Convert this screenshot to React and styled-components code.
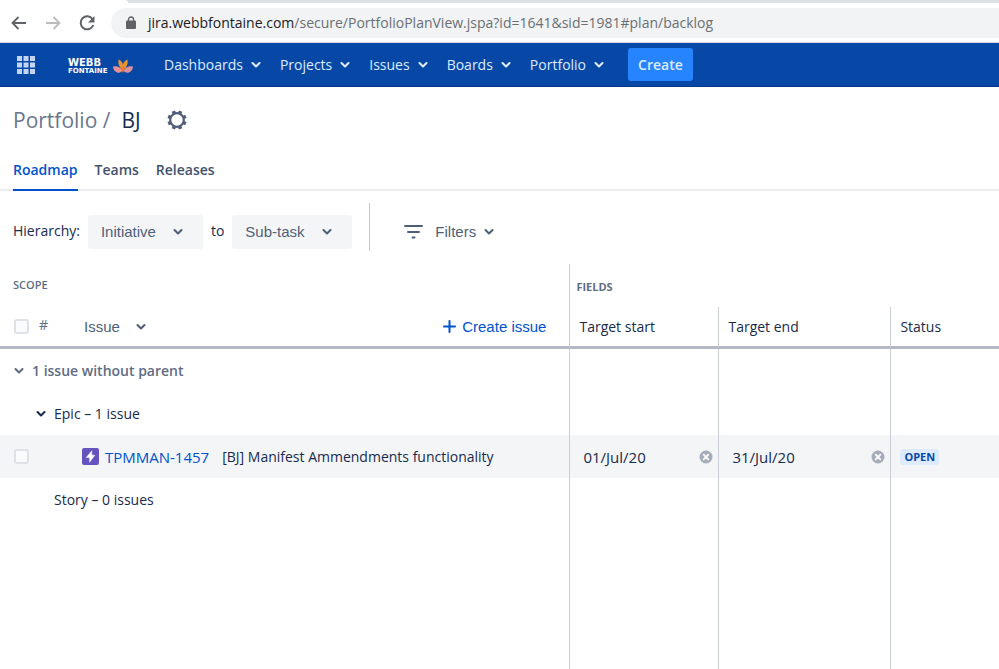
import React from "react";
import styled, { createGlobalStyle } from "styled-components";

const ui = `"Segoe UI", "Open Sans", "Noto Sans", sans-serif`;
const arial = `Arial, "Liberation Sans", sans-serif`;

const GlobalStyle = createGlobalStyle`
  * {
    box-sizing: border-box;
  }
  body {
    margin: 0;
    background: #fff;
    color: #172b4d;
    font: 14px/20px ${ui};
  }
  button, select, input {
    font: inherit;
    color: inherit;
  }
`;

const Page = styled.div`
  display: flex;
  flex-direction: column;
  min-height: 100vh;
  overflow-x: hidden;
`;

// Browser
const TabStrip = styled.div`
  display: flex;
  height: 3px;
  background: #dee1e6;
`;
const ActiveTab = styled.div`
  width: 128px;
  background: #fff;
  border-top-right-radius: 3px;
`;
const BrowserBar = styled.div`
  display: flex;
  align-items: center;
  height: 40px;
  padding-left: 9px;
  border-bottom: 1px solid #dadce0;
`;
const BrowserButton = styled.button`
  display: flex;
  padding: 0;
  margin-right: 14px;
  border: 0;
  background: none;
  color: ${(props) => (props.$dim ? "#babcbe" : "#5f6368")};
`;
const AddressBox = styled.div`
  display: flex;
  flex: 1;
  align-items: center;
  gap: 12px;
  height: 30px;
  padding-left: 15px;
  border-radius: 15px 0 0 15px;
  background: #f1f3f4;
  color: #5f6368;
`;
const Address = styled.div`
  color: #6b6f73;
  white-space: nowrap;
  b {
    color: #202124;
    font-weight: 400;
  }
`;

// Top navigation
const NavBar = styled.nav`
  display: flex;
  align-items: center;
  height: 44px;
  padding-left: 17px;
  background: #0747a6;
  border-bottom: 1px solid #09388a;
  color: #deebff;
`;
const SwitcherButton = styled.button`
  display: flex;
  padding: 0;
  border: 0;
  background: none;
`;
const LogoLink = styled.a`
  display: flex;
  margin: 0 31px 0 32px;
`;
const NavItems = styled.div`
  display: flex;
  gap: 19px;
`;
const MenuButton = styled.button`
  display: flex;
  align-items: center;
  gap: 8px;
  padding: 0;
  border: 0;
  background: none;
  white-space: nowrap;
`;
const CreateButton = styled.button`
  height: 33px;
  margin-left: 24px;
  padding: 0 10px;
  border: 0;
  border-radius: 3px;
  background: #2684ff;
  font-weight: 600;
`;

// Plan header
const PlanHeader = styled.header`
  display: flex;
  align-items: center;
  height: 66px;
  padding-left: 13px;
  font-size: 21px;
  line-height: 28px;
`;
const Crumb = styled.a`
  color: #6b778c;
  text-decoration: none;
`;
const PlanName = styled.h1`
  margin: 0 26px 0 11px;
  font: inherit;
`;
const IconButton = styled.button`
  display: flex;
  padding: 0;
  border: 0;
  background: none;
  color: #505f79;
`;
const Tabs = styled.div`
  display: flex;
  gap: 17px;
  height: 38px;
  padding-left: 13px;
  box-shadow: inset 0 -2px #ebecf0;
`;
const Tab = styled.a`
  padding-top: 7px;
  color: ${(props) => (props.$active ? "#0052cc" : "#42526e")};
  border-bottom: 2px solid ${(props) => (props.$active ? "#0052cc" : "transparent")};
  font-weight: 600;
  text-decoration: none;
`;

// Filters
const Toolbar = styled.div`
  display: flex;
  height: 73px;
  padding: 12px 0 0 13px;
`;
const ToolGroup = styled.div`
  display: flex;
  align-items: center;
  gap: 8px;
  height: 34px;
  margin-top: 12px;
  label {
    padding-bottom: 2px;
  }
`;
const SelectBox = styled.span`
  display: grid;
  align-items: center;
  width: ${(props) => props.$width}px;
  color: #505f79;
  font: 15px/20px ${arial};
  > * {
    grid-area: 1 / 1;
  }
  svg {
    justify-self: end;
    margin-right: 20px;
    pointer-events: none;
  }
`;
const Select = styled.select`
  appearance: none;
  width: 100%;
  height: 34px;
  padding: 0 13px;
  border: 0;
  border-radius: 3px;
  background: #f4f5f7;
`;
const Separator = styled.div`
  width: 1px;
  height: 48px;
  margin: 0 34px 0 17px;
  background: #c1c7d0;
`;
const GreyButton = styled(MenuButton)`
  gap: ${(props) => props.$gap || 8}px;
  color: #505f79;
  font: 15px/20px ${arial};
`;
const FilterLabel = styled.span`
  padding-left: 4px;
`;

// Plan table
const TableArea = styled.main`
  display: grid;
  flex: 1;
`;
const Table = styled.table`
  width: 100%;
  height: 100%;
  border-collapse: separate;
  border-spacing: 0;
  table-layout: fixed;
`;
const Col = styled.col`
  width: ${(props) => props.$width};
`;
const GroupHead = styled.th`
  height: 43px;
  padding: ${(props) => (props.$divided ? "2px 0 0 6px" : "0 0 2px 13px")};
  border-left: ${(props) => (props.$divided ? "1px solid #c9ced6" : "0")};
  color: #5e6c84;
  font-size: 11px;
  font-weight: ${(props) => (props.$divided ? 700 : 600)};
  text-align: left;
`;
const HeadCell = styled.th`
  height: 42px;
  padding: 0 0 0 ${(props) => (props.$scope ? 14 : 9)}px;
  border-left: ${(props) => (props.$scope ? "0" : "1px solid #c9ced6")};
  border-bottom: 3px solid #b3bac5;
  font-weight: 400;
  text-align: left;
`;
const HeadLine = styled.div`
  display: flex;
  align-items: center;
`;
const Hash = styled.span`
  width: 55px;
  padding: 0 0 4px 10px;
  color: #5e6c84;
`;
const CreateIssue = styled(GreyButton)`
  margin: 0 23px 0 auto;
  color: #0052cc;
`;
const CheckBox = styled.input.attrs({ type: "checkbox" })`
  appearance: none;
  width: 15px;
  height: 15px;
  margin: 0;
  border: 2px solid #dfe1e6;
  border-radius: 3px;
  background: #fafbfc;
`;
const Row = styled.tr`
  height: 43px;
  background: ${(props) => (props.$selected ? "#f4f5f7" : "transparent")};
`;
const FillerRow = styled.tr``;
const Cell = styled.td`
  padding: 0 5px 0 13px;
  border-left: 1px solid #c9ced6;
`;
const ScopeCell = styled.td`
  padding: 0 0 0 ${(props) => props.$indent}px;
`;
const GroupToggle = styled(MenuButton)`
  color: ${(props) => (props.$strong ? "#172b4d" : "#5e6c84")};
  font-weight: ${(props) => (props.$bold ? 600 : 400)};
`;
const IssueLine = styled.div`
  display: flex;
  align-items: center;
`;
const EpicBadge = styled.span`
  display: flex;
  margin: 0 6px 0 53px;
`;
const IssueKey = styled.a`
  margin-right: 13px;
  color: #0052cc;
  font-size: 15px;
  text-decoration: none;
`;
const DateLine = styled.div`
  display: flex;
  align-items: center;
  justify-content: space-between;
  font-size: 15px;
`;
const ClearButton = styled(IconButton)`
  color: #a5adba;
`;
const StatusCell = styled(Cell)`
  padding-left: 9px;
`;
const Status = styled.div`
  width: fit-content;
  padding: 0 4px;
  border-radius: 3px;
  background: #deebff;
  color: #0747a6;
  font-size: 11px;
  line-height: 16px;
  font-weight: 700;
`;

const Chevron = () => (
  <svg width="10" height="8" viewBox="0 0 10 8" fill="none">
    <path d="M1.5 2 5 5.5 8.5 2" stroke="currentColor" strokeWidth="2.1" strokeLinecap="round" strokeLinejoin="round" />
  </svg>
);

const Arrow = ({ flip }) => (
  <svg width="20" height="20" viewBox="0 0 20 20" fill="none">
    <path
      d={flip ? "M3 10H16M10.5 4 16.5 10 10.5 16" : "M17 10H4M9.5 4 3.5 10 9.5 16"}
      stroke="currentColor"
      strokeWidth="1.8"
    />
  </svg>
);

const Reload = () => (
  <svg width="20" height="20" viewBox="0 0 20 20" fill="none">
    <path d="M15.6 6.2A6.5 6.5 0 1 0 16.3 12" stroke="currentColor" strokeWidth="2" />
    <path d="M17.5 3V9.5H11Z" fill="currentColor" />
  </svg>
);

const Lock = () => (
  <svg width="10" height="14" viewBox="0 0 10 14" fill="none">
    <rect y="4.5" width="10" height="8.5" rx="1" fill="currentColor" />
    <path d="M2.5 5V3.5a2.5 2.5 0 0 1 5 0V5" stroke="currentColor" strokeWidth="1.4" />
  </svg>
);

const Switcher = () => (
  <svg width="18" height="18" viewBox="0 0 18 18" fill="#c3d5f3">
    {[0, 6.5, 13].map((y) => [0, 6.5, 13].map((x) => <rect key={x + "-" + y} x={x} y={y} width="5" height="5" />))}
  </svg>
);

const Logo = () => (
  <svg width="66" height="20" viewBox="0 0 66 20">
    <g fill="#fff" fontFamily="DejaVu Sans, sans-serif" fontWeight="700">
      <text x="1" y="11" fontSize="10">
        WEBB
      </text>
      <text x="1" y="18" fontSize="7">
        FONTAINE
      </text>
    </g>
    <path d="M55.5 15Q50.500 11 51.500 4.500Q55.500 6 56 10Q56.500 6 60.500 4.500Q61.500 11 56.500 15Z" fill="#e9952f" />
    <path d="M46 11.500Q53 10.500 55.500 16Q53 18.500 50 17.500Q46.500 16 46 11.500Z" fill="#e8918c" />
    <path d="M66 11.500Q59 10.500 56.500 16Q59 18.500 62 17.500Q65.500 16 66 11.500Z" fill="#dd8f9c" />
    <path d="M53.500 12 56 18 58.500 12Z" fill="#e97c36" />
  </svg>
);

const Gear = () => (
  <svg width="20" height="20" viewBox="0 0 20 20" fill="none" stroke="currentColor">
    <circle cx="10" cy="10" r="6.8" strokeWidth="2.2" />
    {[22.5, 67.5, 112.5, 157.5, 202.5, 247.5, 292.5, 337.5].map((turn) => (
      <path key={turn} d="M10 0.4V3" strokeWidth="3.6" transform={`rotate(${turn} 10 10)`} />
    ))}
  </svg>
);

const FilterLines = () => (
  <svg width="19" height="14" viewBox="0 0 19 14" stroke="currentColor" strokeWidth="2" strokeLinecap="round">
    <path d="M1 1H18M4 7H15M8.5 12.5H10.5" />
  </svg>
);

const Plus = () => (
  <svg width="13" height="13" viewBox="0 0 13 13" stroke="currentColor" strokeWidth="2" strokeLinecap="round">
    <path d="M6.5 1V12M1 6.5H12" />
  </svg>
);

const EpicIcon = () => (
  <svg width="17" height="17" viewBox="0 0 17 17">
    <rect width="17" height="17" rx="2" fill="#6554c0" />
    <path d="M9.8 2.8V7.2H12.8L7.6 14.2V9.5H4.3Z" fill="#fff" stroke="#fff" strokeWidth="0.5" strokeLinejoin="round" />
  </svg>
);

const Clear = () => (
  <svg width="14" height="14" viewBox="0 0 14 14">
    <circle cx="7" cy="7" r="6.5" fill="currentColor" />
    <path d="M4.7 4.7 9.3 9.3M9.3 4.7 4.7 9.3" stroke="#fff" strokeWidth="1.8" strokeLinecap="round" />
  </svg>
);

const menus = ["Dashboards", "Projects", "Issues", "Boards", "Portfolio"];
const tabs = ["Roadmap", "Teams", "Releases"];

const DateField = ({ value, label }) => (
  <DateLine>
    {value}
    <ClearButton aria-label={`Clear ${label}`}>
      <Clear />
    </ClearButton>
  </DateLine>
);

const EmptyCells = () => (
  <>
    <Cell />
    <Cell />
    <Cell />
  </>
);

const App = () => (
  <Page>
    <GlobalStyle />
    <TabStrip>
      <ActiveTab />
    </TabStrip>
    <BrowserBar>
      <BrowserButton aria-label="Back">
        <Arrow />
      </BrowserButton>
      <BrowserButton aria-label="Forward" $dim>
        <Arrow flip />
      </BrowserButton>
      <BrowserButton aria-label="Reload">
        <Reload />
      </BrowserButton>
      <AddressBox>
        <Lock />
        <Address>
          <b>jira.webbfontaine.com</b>/secure/PortfolioPlanView.jspa?id=1641&amp;sid=1981#plan/backlog
        </Address>
      </AddressBox>
    </BrowserBar>

    <NavBar>
      <SwitcherButton aria-label="Applications">
        <Switcher />
      </SwitcherButton>
      <LogoLink href="#home" aria-label="Home">
        <Logo />
      </LogoLink>
      <NavItems>
        {menus.map((menu) => (
          <MenuButton key={menu}>
            {menu}
            <Chevron />
          </MenuButton>
        ))}
      </NavItems>
      <CreateButton>Create</CreateButton>
    </NavBar>

    <PlanHeader>
      <Crumb href="#portfolio">Portfolio /</Crumb>
      <PlanName>BJ</PlanName>
      <IconButton aria-label="Plan settings">
        <Gear />
      </IconButton>
    </PlanHeader>
    <Tabs>
      {tabs.map((tab, i) => (
        <Tab key={tab} href={`#${tab}`} $active={i === 0}>
          {tab}
        </Tab>
      ))}
    </Tabs>

    <Toolbar>
      <ToolGroup>
        <label htmlFor="from-level">Hierarchy:</label>
        <SelectBox $width={115}>
          <Select id="from-level">
            <option>Initiative</option>
          </Select>
          <Chevron />
        </SelectBox>
        <label htmlFor="to-level">to</label>
        <SelectBox $width={120}>
          <Select id="to-level">
            <option>Sub-task</option>
          </Select>
          <Chevron />
        </SelectBox>
      </ToolGroup>
      <Separator />
      <ToolGroup>
        <GreyButton>
          <FilterLines />
          <FilterLabel>Filters</FilterLabel>
          <Chevron />
        </GreyButton>
      </ToolGroup>
    </Toolbar>

    <TableArea>
      <Table>
        <colgroup>
          <Col $width="57%" />
          <Col $width="149px" />
          <Col $width="172px" />
          <Col />
        </colgroup>
        <thead>
          <tr>
            <GroupHead>SCOPE</GroupHead>
            <GroupHead colSpan={3} $divided>
              FIELDS
            </GroupHead>
          </tr>
          <tr>
            <HeadCell $scope>
              <HeadLine>
                <CheckBox aria-label="Select all issues" />
                <Hash>#</Hash>
                <GreyButton $gap={16}>
                  Issue
                  <Chevron />
                </GreyButton>
                <CreateIssue $gap={6}>
                  <Plus />
                  Create issue
                </CreateIssue>
              </HeadLine>
            </HeadCell>
            <HeadCell>Target start</HeadCell>
            <HeadCell>Target end</HeadCell>
            <HeadCell>Status</HeadCell>
          </tr>
        </thead>
        <tbody>
          <Row>
            <ScopeCell $indent={14}>
              <GroupToggle $bold>
                <Chevron />1 issue without parent
              </GroupToggle>
            </ScopeCell>
            <EmptyCells />
          </Row>
          <Row>
            <ScopeCell $indent={36}>
              <GroupToggle $strong>
                <Chevron />
                Epic – 1 issue
              </GroupToggle>
            </ScopeCell>
            <EmptyCells />
          </Row>
          <Row $selected>
            <ScopeCell $indent={14}>
              <IssueLine>
                <CheckBox aria-label="Select TPMMAN-1457" />
                <EpicBadge>
                  <EpicIcon />
                </EpicBadge>
                <IssueKey href="#TPMMAN-1457">TPMMAN-1457</IssueKey>
                [BJ] Manifest Ammendments functionality
              </IssueLine>
            </ScopeCell>
            <Cell>
              <DateField value="01/Jul/20" label="target start" />
            </Cell>
            <Cell>
              <DateField value="31/Jul/20" label="target end" />
            </Cell>
            <StatusCell>
              <Status>OPEN</Status>
            </StatusCell>
          </Row>
          <Row>
            <ScopeCell $indent={54}>Story – 0 issues</ScopeCell>
            <EmptyCells />
          </Row>
          <FillerRow>
            <ScopeCell />
            <EmptyCells />
          </FillerRow>
        </tbody>
      </Table>
    </TableArea>
  </Page>
);

export default App;
